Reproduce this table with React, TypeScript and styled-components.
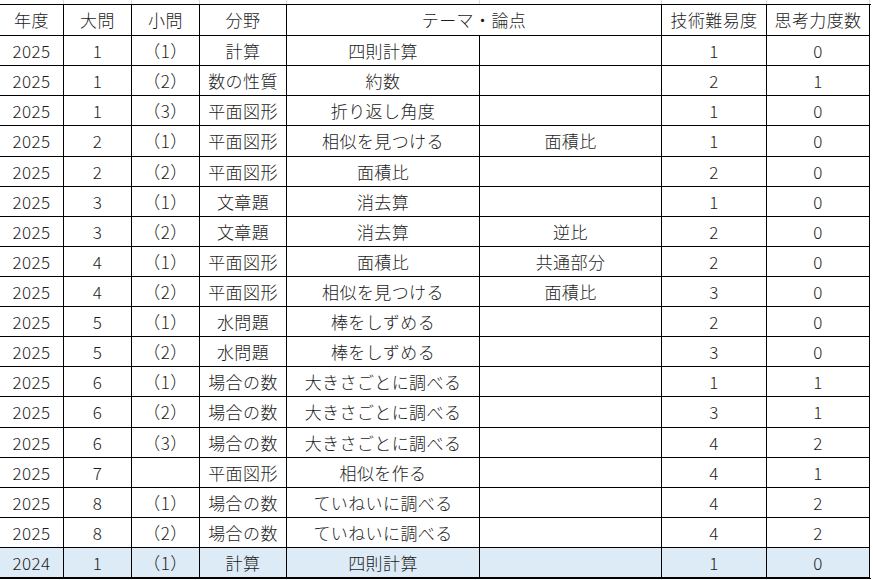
import React from "react";
import styled, { createGlobalStyle } from "styled-components";

interface Item {
  year: string;
  big: string;
  small: string;
  field: string;
  theme: string;
  point: string;
  skill: string;
  think: string;
}

const COLS = "64px 68px 68px 87px 193px 182px 105px 103px";

const rows: Item[] = [
  { year: "2025", big: "1", small: "（1）", field: "計算", theme: "四則計算", point: "", skill: "1", think: "0" },
  { year: "2025", big: "1", small: "（2）", field: "数の性質", theme: "約数", point: "", skill: "2", think: "1" },
  { year: "2025", big: "1", small: "（3）", field: "平面図形", theme: "折り返し角度", point: "", skill: "1", think: "0" },
  { year: "2025", big: "2", small: "（1）", field: "平面図形", theme: "相似を見つける", point: "面積比", skill: "1", think: "0" },
  { year: "2025", big: "2", small: "（2）", field: "平面図形", theme: "面積比", point: "", skill: "2", think: "0" },
  { year: "2025", big: "3", small: "（1）", field: "文章題", theme: "消去算", point: "", skill: "1", think: "0" },
  { year: "2025", big: "3", small: "（2）", field: "文章題", theme: "消去算", point: "逆比", skill: "2", think: "0" },
  { year: "2025", big: "4", small: "（1）", field: "平面図形", theme: "面積比", point: "共通部分", skill: "2", think: "0" },
  { year: "2025", big: "4", small: "（2）", field: "平面図形", theme: "相似を見つける", point: "面積比", skill: "3", think: "0" },
  { year: "2025", big: "5", small: "（1）", field: "水問題", theme: "棒をしずめる", point: "", skill: "2", think: "0" },
  { year: "2025", big: "5", small: "（2）", field: "水問題", theme: "棒をしずめる", point: "", skill: "3", think: "0" },
  { year: "2025", big: "6", small: "（1）", field: "場合の数", theme: "大きさごとに調べる", point: "", skill: "1", think: "1" },
  { year: "2025", big: "6", small: "（2）", field: "場合の数", theme: "大きさごとに調べる", point: "", skill: "3", think: "1" },
  { year: "2025", big: "6", small: "（3）", field: "場合の数", theme: "大きさごとに調べる", point: "", skill: "4", think: "2" },
  { year: "2025", big: "7", small: "", field: "平面図形", theme: "相似を作る", point: "", skill: "4", think: "1" },
  { year: "2025", big: "8", small: "（1）", field: "場合の数", theme: "ていねいに調べる", point: "", skill: "4", think: "2" },
  { year: "2025", big: "8", small: "（2）", field: "場合の数", theme: "ていねいに調べる", point: "", skill: "4", think: "2" },
  { year: "2024", big: "1", small: "（1）", field: "計算", theme: "四則計算", point: "", skill: "1", think: "0" },
];

const App = () => {
  return (
    <>
      <GlobalStyle />
      <Sheet>
        <GridStrip>
          {Array.from({ length: 8 }).map((_, i) => (
            <Gap key={i} />
          ))}
        </GridStrip>
        <Table>
          <Cell $head>年度</Cell>
          <Cell $head>大問</Cell>
          <Cell $head>小問</Cell>
          <Cell $head>分野</Cell>
          <Cell $head $span={2}>テーマ・論点</Cell>
          <Cell $head>技術難易度</Cell>
          <Cell $head>思考力度数</Cell>
          {rows.map((r, i) => {
            const hl = i === rows.length - 1;
            return (
              <Row key={i}>
                <Cell $hl={hl}>{r.year}</Cell>
                <Cell $hl={hl}>{r.big}</Cell>
                <Cell $hl={hl}>{r.small}</Cell>
                <Cell $hl={hl}>{r.field}</Cell>
                <Cell $hl={hl}>{r.theme}</Cell>
                <Cell $hl={hl}>{r.point}</Cell>
                <Cell $hl={hl}>{r.skill}</Cell>
                <Cell $hl={hl}>{r.think}</Cell>
              </Row>
            );
          })}
        </Table>
      </Sheet>
    </>
  );
};

const GlobalStyle = createGlobalStyle`
  html, body {
    margin: 0;
    padding: 0;
    background: #fff;
  }
  * {
    box-sizing: border-box;
  }
`;

const Sheet = styled.div`
  width: 873px;
  height: 580px;
  overflow: hidden;
  font-family: "Noto Sans CJK JP", "Noto Sans", sans-serif;
  font-size: 17px;
  font-weight: 300;
  color: #1c1c1c;
  background: #fff;
`;

const GridStrip = styled.div`
  display: grid;
  grid-template-columns: ${COLS};
  height: 4px;
`;

const Gap = styled.div`
  border-right: 1px solid #dcdcdc;
`;

const Table = styled.div`
  display: grid;
  grid-template-columns: ${COLS};
  grid-template-rows: 31px repeat(3, 30px) 31px repeat(8, 30px) 31px repeat(5, 30px);
  border-top: 1px solid #000;
  border-bottom: 1px solid #000;
  width: 871px;
`;

const Row = styled.div`
  display: contents;
`;

const Cell = styled.div<{ $head?: boolean; $hl?: boolean; $span?: number }>`
  display: flex;
  align-items: center;
  justify-content: center;
  white-space: nowrap;
  letter-spacing: 0.4px;
  border-right: 1px solid #000;
  border-bottom: 1px solid #000;
  background: ${({ $hl }) => ($hl ? "#ddebf7" : "#fff")};
  grid-column: ${({ $span }) => ($span ? `span ${$span}` : "auto")};
  padding-bottom: 1px;
`;

export default App;
